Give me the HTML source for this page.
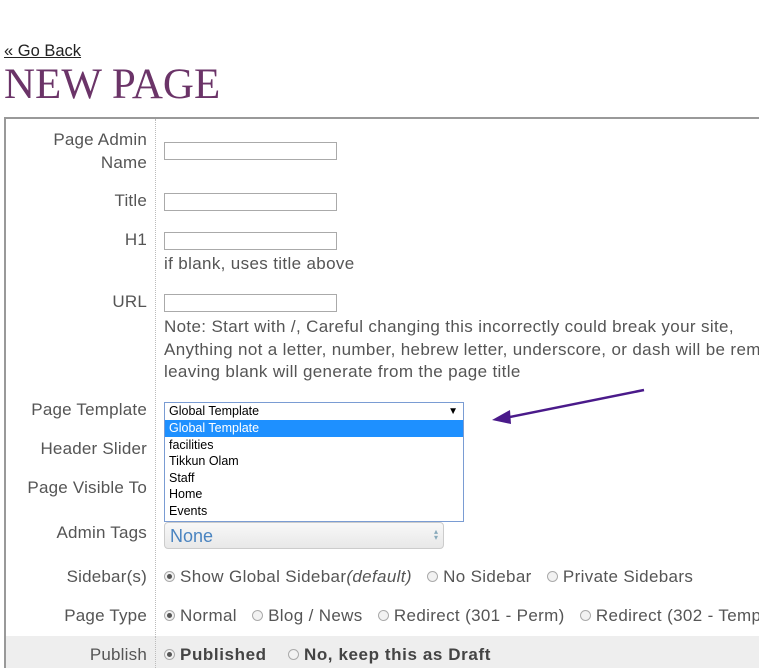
<!DOCTYPE html>
<html><head><style>
body{margin:0;width:759px;height:668px;overflow:hidden;background:#fff;font-family:"Liberation Sans",sans-serif;position:relative;color:#555}
#w{position:absolute;left:0;top:0;width:759px;height:668px;overflow:hidden}
.a{position:absolute;white-space:nowrap}
.l{position:absolute;right:612px;text-align:right;font-size:17px;letter-spacing:0.2px;color:#555;white-space:nowrap}
.in{position:absolute;left:164px;width:171px;height:16px;border:1px solid #aaa;background:#fff}
.t{position:absolute;left:164px;font-size:17px;letter-spacing:0.35px;color:#555;white-space:nowrap}
.r{display:inline-block;width:9px;height:9px;border:1px solid #aaa;border-radius:50%;background:#f2f2f2;vertical-align:0px;margin-right:5px;position:relative}
.r.on:after{content:"";position:absolute;left:2px;top:2px;width:5px;height:5px;border-radius:50%;background:#555}
.it{height:16.6px;line-height:16.6px;padding-left:4px;font-size:12.5px;color:#000}
</style></head><body><div id="w">
<div class="a" style="left:4px;top:42px;font-size:16.5px;color:#222;text-decoration:underline">« Go Back</div>
<div class="a" style="left:4px;top:60px;font-family:'Liberation Serif',serif;font-size:43px;color:#6b3468">NEW PAGE</div>
<div class="a" style="left:4px;top:117px;width:760px;height:560px;border-left:2px solid #999;border-top:2px solid #999"></div>
<div class="a" style="left:155px;top:119px;height:560px;border-left:1px dotted #bbb"></div>
<div class="a" style="left:6px;top:636px;width:753px;height:32px;background:#eee"></div>
<div class="a" style="left:155px;top:636px;height:32px;border-left:1px dotted #bbb"></div>

<div class="l" style="top:128px;line-height:23px">Page Admin<br>Name</div>
<div class="in" style="top:142px"></div>
<div class="l" style="top:191px">Title</div>
<div class="in" style="top:193px"></div>
<div class="l" style="top:230px">H1</div>
<div class="in" style="top:232px"></div>
<div class="t" style="top:254px">if blank, uses title above</div>
<div class="l" style="top:292px">URL</div>
<div class="in" style="top:294px"></div>
<div class="t" style="top:316px;line-height:22.5px">Note: Start with /, Careful changing this incorrectly could break your site,<br>Anything not a letter, number, hebrew letter, underscore, or dash will be removed<br>leaving blank will generate from the page title</div>

<div class="l" style="top:400px">Page Template</div>
<div class="l" style="top:439px">Header Slider</div>
<div class="l" style="top:478px">Page Visible To</div>
<div class="l" style="top:523px">Admin Tags</div>
<div class="l" style="top:567px">Sidebar(s)</div>
<div class="l" style="top:606px">Page Type</div>
<div class="l" style="top:645px">Publish</div>

<div class="a" style="left:164px;top:522px;width:278px;height:25px;border:1px solid #ccc;border-radius:4px;background:linear-gradient(#f8f8f8,#e8e8e8)"><span style="position:absolute;left:5px;top:3px;font-size:18px;color:#4a84c0">None</span><span style="position:absolute;right:5px;top:4px;font-size:8px;color:#8ab">▴</span><span style="position:absolute;right:5px;top:10px;font-size:8px;color:#8ab">▾</span></div>

<div class="a" style="left:164px;top:402px;width:298px;height:17px;border:1px solid #7a9cd3;background:#fff;font-size:12.5px;color:#000;line-height:17px"><span style="padding-left:4px">Global Template</span><span style="position:absolute;right:5px;top:0;font-size:10px">▼</span></div>
<div class="a" style="left:164px;top:420px;width:298px;height:101px;border:1px solid #7a9cd3;border-top:none;background:#fff">
<div class="it" style="background:#1e90ff;color:#fff">Global Template</div>
<div class="it">facilities</div><div class="it">Tikkun Olam</div><div class="it">Staff</div><div class="it">Home</div><div class="it">Events</div></div>

<svg class="a" style="left:480px;top:380px" width="180" height="50"><line x1="164" y1="10" x2="25" y2="38" stroke="#4a1a8a" stroke-width="2.5"/><polygon points="12,40 30,30 31,44" fill="#4a1a8a"/></svg>

<div class="t" style="top:567px"><span class="r on"></span>Show Global Sidebar<i>(default)</i> &nbsp; <span class="r"></span>No Sidebar &nbsp; <span class="r"></span>Private Sidebars</div>
<div class="t" style="top:606px"><span class="r on"></span>Normal &nbsp; <span class="r"></span>Blog / News &nbsp; <span class="r"></span>Redirect (301 - Perm) &nbsp; <span class="r"></span>Redirect (302 - Temp)</div>
<div class="t" style="top:645px;font-weight:bold;color:#444;letter-spacing:0.6px"><span class="r on"></span>Published &nbsp;&nbsp; <span class="r"></span>No, keep this as Draft</div>
</div></body></html>
